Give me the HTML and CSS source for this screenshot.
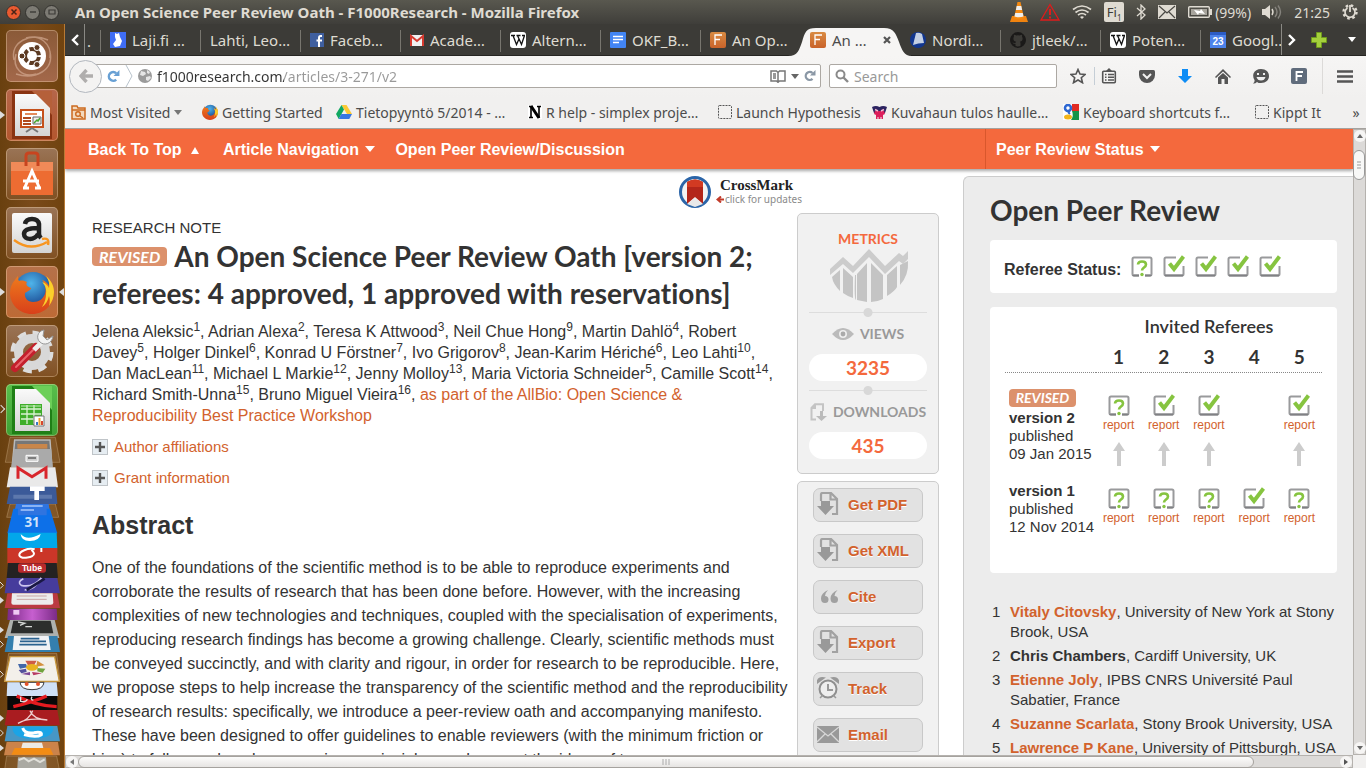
FILE: index.html
```html
<!DOCTYPE html>
<html lang="en">
<head>
<meta charset="utf-8">
<title>An Open Science Peer Review Oath - F1000Research</title>
<link rel="stylesheet" href="styles.css">
</head>
<body>
<svg class="defs" aria-hidden="true">
  <defs>
    <linearGradient id="gAqua" x1="0" y1="0" x2="0" y2="1"><stop offset="0" stop-color="#d98b42"/><stop offset="1" stop-color="#c9632a"/></linearGradient>
    <linearGradient id="gGray" x1="0" y1="0" x2="0" y2="1"><stop offset="0" stop-color="#fafafa"/><stop offset="1" stop-color="#d4d4d4"/></linearGradient>
    <linearGradient id="gPurple" x1="0" y1="0" x2="1" y2="0"><stop offset="0" stop-color="#7a2a86"/><stop offset=".5" stop-color="#c65fcf"/><stop offset="1" stop-color="#7a2a86"/></linearGradient>
    <radialGradient id="gGlobe" cx=".45" cy=".3" r=".7"><stop offset="0" stop-color="#4fb4ea"/><stop offset="1" stop-color="#123a86"/></radialGradient>
    <linearGradient id="gFox" x1="0" y1="0" x2="0" y2="1"><stop offset="0" stop-color="#ee7a1d"/><stop offset="1" stop-color="#d8401a"/></linearGradient>
  </defs>
  <symbol id="firefox" viewBox="0 0 44 44">
    <circle cx="23" cy="21" r="19" fill="url(#gGlobe)"/>
    <path d="M36 6c6 5 8 11 8 16 0 12-9 22-22 22C9 44 0 34 0 23c0-5 2-10 5-13 1-2 3-4 3-4 0 2 0 4 1 5 3-1 6 0 8 1-2 3 1 5 4 6 0 2-3 3-6 5-1 5 3 9 8 9 6 0 10-3 12-8 2-6-1-12-3-14 4 1 6 4 7 6 1-4-1-8-3-10z" fill="url(#gFox)"/>
    <path d="M36 6c6 5 8 11 8 16 0 5-2 10-5 14 1-4 1-7 0-10-1 5-4 9-7 11 3-5 4-9 4-13 1-6-2-10-4-12 4 1 6 4 7 6 1-5-1-9-3-12z" fill="#fbcf2b"/>
  </symbol>
  <symbol id="f1000" viewBox="0 0 16 16"><rect width="16" height="16" rx="2" fill="url(#gAqua)"/><path d="M5 13V3h7M5 7.500h5" fill="none" stroke="#fff" stroke-width="1.300"/></symbol>
  <symbol id="wiki" viewBox="0 0 16 16"><rect width="16" height="16" rx="3" fill="#fff"/><path d="M1 3.500h4M6.500 3.500h4M12 3.500h3M3 3.500l3.500 9L9 7M7.500 3.500l4 9 3-9" fill="none" stroke="#111" stroke-width="1.300"/></symbol>
  <symbol id="check" viewBox="0 0 22 22"><path d="M13 2.500H3Q1.500 2.500 1.500 4v15Q1.500 20.500 3 20.500h16q1.500 0 1.500-1.500v-8" fill="#fff" stroke="#999a9c" stroke-width="2"/><path d="M2 20.500h18" stroke="#808184" stroke-width="2"/><path d="M6.500 8.500l4.500 5.500L20.500 1.500" fill="none" stroke="#86c440" stroke-width="4"/></symbol>
  <symbol id="query" viewBox="0 0 22 22"><path d="M8 20.500H3Q1.500 20.500 1.500 19V4Q1.500 2.500 3 2.500h16q1.500 0 1.500 1.500v15q0 1.500-1.500 1.500h-5" fill="#fff" stroke="#999a9c" stroke-width="2"/><path d="M2 20q.3.500 1 .5h5M14 20.500h5q.700 0 1-.5" fill="none" stroke="#808184" stroke-width="2"/><path d="M7 9.500q0-3 4-3t4 3c0 3-4 3-4 6" fill="none" stroke="#86c440" stroke-width="2.600"/><circle cx="11" cy="19.500" r="1.700" fill="#86c440"/></symbol>
  <symbol id="uparrow" viewBox="0 0 12 24"><path d="M6 0l6 9H8v15H4V9H0z" fill="#ccc"/></symbol>
  <symbol id="getfile" viewBox="0 0 22 24"><path d="M4 9V2.500Q4 1 5.500 1H14l6 6v15H15M13.500 1v6.500H20" fill="none" stroke="#a2a2a2" stroke-width="2.200"/><path d="M4 9h9v5h4l-8.500 9L0 14h4z" fill="#999"/></symbol>
  <symbol id="dashed" viewBox="0 0 14 14"><rect x=".5" y=".5" width="13" height="13" rx="1" fill="none" stroke="#555" stroke-dasharray="2 1"/></symbol>
  <symbol id="reload" viewBox="0 0 12 12"><path d="M8.500 8.800A4 4 0 1 1 8.500 3" fill="none" stroke="currentColor" stroke-width="2.300"/><path d="M11.500 0v5.500H6z" fill="currentColor"/></symbol>
  <symbol id="plus" viewBox="0 0 16 16"><rect x=".5" y=".5" width="15" height="15" fill="#e6edf2" stroke="#bfc4c8"/><path d="M8 3v10M3 8h10" stroke="#555" stroke-width="2.400"/></symbol>
  <symbol id="cone" viewBox="0 0 18 20"><path d="M2 14h14l2 6H0z" fill="#f0830f"/><path d="M7.500 0h3L14 16q-5 2-10 0z" fill="#f58a12"/><path d="M6.700 4h4.600l.8 4H5.900zM5.200 11h7.600l.7 3.500q-4.500 1.500-9 0z" fill="#eee"/></symbol>
</svg>

<header class="topbar">
  <div class="winbtns">
    <button class="wbtn close" aria-label="Close"><svg width="8" height="8" viewBox="0 0 8 8"><path d="M1.500 1.500l5 5M6.500 1.500l-5 5" stroke="#4a2418" stroke-width="1.500"/></svg></button>
    <button class="wbtn" aria-label="Minimise"><svg width="8" height="8" viewBox="0 0 8 8"><path d="M1 4h6" stroke="#3c3b37" stroke-width="1.400"/></svg></button>
    <button class="wbtn" aria-label="Maximise"><svg width="8" height="8" viewBox="0 0 8 8"><path d="M1 2h6v4H1z" fill="none" stroke="#3c3b37" stroke-width="1.200"/></svg></button>
  </div>
  <div class="wintitle">An Open Science Peer Review Oath - F1000Research - Mozilla Firefox</div>
  <div class="indicators">
    <svg width="18" height="20"><use href="#cone"/></svg>
    <svg width="20" height="18" viewBox="0 0 20 18"><path d="M10 1.500L19 17H1z" fill="none" stroke="#e01b1b" stroke-width="1.300"/><path d="M10 6v6M10 13.500v2" stroke="#e01b1b" stroke-width="2"/></svg>
    <svg width="20" height="14" viewBox="0 0 20 14"><g fill="none" stroke="#dfdbd2" stroke-width="1.700"><path d="M1 4.500q9-7 18 0M3.500 7.500q6.500-5 13 0M6 10q4-3 8 0"/></g><path d="M8 12q2-1.500 4 0l-2 2z" fill="#dfdbd2"/></svg>
    <span class="kbd">Fi<sub>1</sub></span>
    <svg width="10" height="16" viewBox="0 0 10 16"><path d="M1 4l8 7-4 4V1l4 4-8 7" fill="none" stroke="#dfdbd2" stroke-width="1.300"/></svg>
    <svg width="18" height="14" viewBox="0 0 18 14"><rect width="18" height="14" fill="#dfdbd2"/><path d="M1 1l8 7 8-7M1 13l6-6M17 13l-6-6" fill="none" stroke="#4a4944" stroke-width="1.200"/></svg>
    <span class="battery"><svg width="24" height="12" viewBox="0 0 24 12"><rect x=".7" y=".7" width="20.600" height="10.600" rx="1" fill="none" stroke="#dfdbd2" stroke-width="1.400"/><rect x="3" y="3" width="16" height="6" fill="#a7a49c"/><path d="M22 3h2v6h-2z" fill="#dfdbd2"/><path d="M6 4l6 1 1-2 4 5-6-1-1 2z" fill="#fff"/></svg>(99%)</span>
    <svg width="20" height="16" viewBox="0 0 20 16"><path d="M0 5h3l5-4v14l-5-4H0z" fill="#dfdbd2"/><g fill="none" stroke-width="1.400"><path d="M10 5q2 3 0 6" stroke="#dfdbd2"/><path d="M13 3q4 5 0 10M16 1.500q5 6.500 0 13" stroke="#85837d"/></g></svg>
    <time class="clock">21:25</time>
    <svg width="16" height="16" viewBox="0 0 16 16"><circle cx="8" cy="8" r="6.500" fill="none" stroke="#dfdbd2" stroke-width="2.400" stroke-dasharray="2.500 2.600"/><path d="M5.500 4A5 5 0 1 0 10.500 4" fill="none" stroke="#dfdbd2" stroke-width="1.700"/><path d="M8 1v7" stroke="#dfdbd2" stroke-width="1.800"/></svg>
  </div>
</header>

<div class="desktop">
  <nav class="dock" aria-label="Launcher">
    <a class="tile t-ubuntu" href="#" aria-label="Dash">
      <svg width="52" height="52" viewBox="0 0 52 52"><g fill="none" stroke="#dcb49c" stroke-opacity=".6" stroke-width="1.500"><path d="M8 30C4 12 24 2 42 10M44 22c4 18-14 28-34 22M20 8c14-4 26 6 24 20M30 44C16 48 6 38 10 24"/></g><circle cx="26" cy="26" r="14" fill="#fff"/><circle cx="26" cy="26" r="7" fill="none" stroke="#5c3a22" stroke-width="4" stroke-dasharray="12.500 2.160" stroke-dashoffset="-1"/><g fill="#5c3a22" stroke="#fff"><circle cx="16" cy="26" r="3"/><circle cx="31" cy="17.500" r="3"/><circle cx="31" cy="34.500" r="3"/></g></svg></a>
    <a class="tile t-rust on" href="#" aria-label="Impress">
      <svg width="52" height="52" viewBox="0 0 52 52"><path d="M6 2h40v48H6z" fill="#8a3412"/><path d="M26 2h20v24z" fill="#b5603a"/><path d="M9 5h21l14 14v28H9z" fill="url(#gGray)"/><path d="M15 21h22v17H15z" fill="#fff" stroke="#c5501b" stroke-width="2"/><path d="M19 25h12" stroke="#e38b5c" stroke-width="2"/><path d="M17 29h8M17 32h8M17 35h8" stroke="#b14a1e" stroke-width="2"/><path d="M27 28h8v7h-8z" fill="#eee" stroke="#666"/><path d="M28 34l3-3 1 1 2-3" fill="none" stroke="#45a52d" stroke-width="1.500"/><path d="M26 39l-6 4M26 39l6 4" stroke="#777" stroke-width="2"/></svg></a>
    <a class="tile" href="#" aria-label="Software Centre">
      <svg width="52" height="52" viewBox="0 0 52 52"><path d="M5 14h42v33H5z" fill="#ed6c32"/><path d="M5 14h42v9H5z" fill="#f08a58"/><path d="M20 18V8q0-3 3-3h6q3 0 3 3v10" fill="none" stroke="#c8441f" stroke-width="3"/><path d="M17 40h6M29 40h6M19 39l7-16 7 16M17 33h16" fill="none" stroke="#fff" stroke-width="3"/></svg></a>
    <a class="tile" href="#" aria-label="Amazon">
      <svg width="52" height="52" viewBox="0 0 52 52"><rect x="6" y="6" width="40" height="40" rx="2" fill="url(#gGray)"/><path d="M19 17q1-5 7-5t7 5v10q0 2 2 4M32 21c-8 0-14 1-14 6 0 6 10 7 14 0" fill="none" stroke="#222" stroke-width="4.500"/><path d="M8 33q16 12 33 2M36 32q8-2 6 6" fill="none" stroke="#f79520" stroke-width="2.400"/></svg></a>
    <a class="tile t-orange on focus" href="#" aria-label="Firefox"><svg width="44" height="44"><use href="#firefox"/></svg></a>
    <a class="tile" href="#" aria-label="System Settings">
      <svg width="52" height="52" viewBox="0 0 52 52"><circle cx="26" cy="27" r="18" fill="none" stroke="#ddd" stroke-width="7" stroke-dasharray="8 6.130"/><circle cx="26" cy="27" r="13.500" fill="none" stroke="#d8d8d8" stroke-width="9"/><path d="M9 43L30 22" stroke="#c41f2c" stroke-width="8" stroke-linecap="round"/><path d="M10 42L28 24" stroke="#e8666c" stroke-width="2" stroke-linecap="round"/><path d="M28 25l7-7" stroke="#eee" stroke-width="5"/><path d="M38 5c-7 1-8 9-4 12 4 4 12 2 13-6l-6 4-4-4z" fill="#f2f2f2" stroke="#999"/></svg></a>
    <a class="tile t-green some" href="#" aria-label="Calc">
      <svg width="52" height="52" viewBox="0 0 52 52"><path d="M6 2h40v48H6z" fill="#1f7f16"/><path d="M26 2h20v24z" fill="#6ccf58"/><path d="M9 5h21l14 14v28H9z" fill="url(#gGray)"/><path d="M14 20h22v21H14z" fill="#3fae2a"/><path d="M15 25h20M15 30h20M15 35h20M21 21v19M28 21v19" stroke="#d9f2d2" stroke-width="1.300"/><path d="M15 22h20" stroke="#caf0c0"/><path d="M28 32h10v10H28z" fill="#fff" stroke="#777"/><path d="M30 38h2v3h-2z" fill="#3b78c4"/><path d="M32.500 34h2v7h-2z" fill="#f0a030"/><path d="M35 37h2v4h-2z" fill="#d8462c"/></svg></a>
    <svg class="stack" width="65" height="332" viewBox="0 168 195 996" role="img" aria-label="More launchers">
      <g fill="#d5b58c" fill-opacity=".16" stroke="#d9b78e" stroke-opacity=".55" stroke-width="2"><path d="M30 172h136l14 75H16zM30 372h136l10 40H20zM26 820h144l10 80H14zM20 1128h150l8 40H14z"/></g>
      <path d="M42 178h110l6 84H34z" fill="#b9b9b9"/><path d="M46 182h102l2 26H44z" fill="#777"/><path d="M52 192h90v14H52z" fill="#c9864a"/><path d="M42 208h112l4 54H34z" fill="#aaa"/><path d="M78 226h36v18H78z" fill="#ccc" stroke="#fff" stroke-width="3"/><path d="M84 234h24" stroke="#555" stroke-width="4"/>
      <path d="M30 262h136l8 60H20z" fill="#e9e9e9"/><path d="M54 296V264l42 26 42-26v32" fill="none" stroke="#d8262c" stroke-width="9"/>
      <path d="M30 320h138l4 52H20z" fill="#3b5a99"/><path d="M40 344h116v12H40z" fill="#5d78ad"/><path d="M90 326h44M110 320v40" stroke="#fff" stroke-width="14"/>
      <path d="M48 372h98l6 38H40z" fill="#2f74e0"/><path d="M66 378h62M62 390h40" stroke="#a9c8fa" stroke-width="5"/>
      <path d="M40 386h14v20h86v-20h10l22 74H22z" fill="#0d70e8"/><text x="96" y="441" text-anchor="middle" class="st-31">31</text>
      <path d="M24 458h146l2 46H22z" fill="#02a7ea"/><path d="M62 462q18 22 60 0-4 22-34 21-24 0-26-21z" fill="#fff"/>
      <path d="M22 504h150v46H22z" fill="#cb3628"/><path d="M104 508c-20-5-48 6-46 18 4 12 46 8 44-6q-2-6-8-10M124 504v12" fill="none" stroke="#fff" stroke-width="6"/>
      <path d="M24 549h146l4 45H20z" fill="#242222"/><rect x="54" y="550" width="84" height="28" rx="8" fill="#b8292c"/><text x="96" y="573" text-anchor="middle" class="st-tube">Tube</text>
      <path d="M20 594h152l8 46H14z" fill="#463c9c"/><path d="M70 596q-20 10-6 20 34 8 60-22-20 36-50 36" fill="none" stroke="#cdc6ef" stroke-width="5"/><path d="M134 596l-54 34" stroke="#191845" stroke-width="8"/>
      <path d="M22 640h150l8 44H14z" fill="#bb3a42"/><path d="M36 640h122l2 28q0 6-8 6H40q-6 0-6-6z" fill="#ececec"/><path d="M50 648h90M50 658h90" stroke="#c9a5a5" stroke-width="3"/>
      <path d="M24 686h146l2 34H22z" fill="url(#gPurple)"/><path d="M40 690h18v14H40z" fill="#f0c9f3"/>
      <path d="M30 720h134l14 54H14z" fill="#aeb1ae"/><path d="M40 722h112l8 38H32z" fill="#2c2e2c"/><path d="M54 726l20 4-14 6M76 740h20" fill="none" stroke="#d5d8d5" stroke-width="4"/>
      <path d="M24 768h148l8 48H14z" fill="#347fae"/><path d="M42 768h104l6 42H38z" fill="#f1f3f5"/><path d="M62 776h56M60 784h78M58 794h82" stroke="#2a628f" stroke-width="5"/>
      <path d="M30 830h134l14 74H14z" fill="#f3f0ea" stroke="#c7973d" stroke-width="4"/><g><path d="M76 842h34l-8 14H84z" fill="#cd5c48"/><path d="M112 842l22 14-26 4z" fill="#d4903c"/><path d="M54 852h24l4 10-22 4z" fill="#4267a8"/><path d="M56 870l22-4 2 10-16 4z" fill="#55529c"/><path d="M64 882l26-6v10z" fill="#7b4796"/><path d="M96 876l30 4-26 6z" fill="#b73a63"/><path d="M112 864l24 2-8 12-16-4z" fill="#70a23e"/><ellipse cx="96" cy="862" rx="18" ry="10" fill="#e8b321"/></g>
      <path d="M22 907h148l4 41H20z" fill="#cfe1f7"/><path d="M60 907h72q-2 22-36 22t-36-22z" fill="#fff" stroke="#3c3c3c" stroke-width="3"/><circle cx="80" cy="912" r="6" fill="#e5532b"/><circle cx="114" cy="912" r="6" fill="#e5532b"/>
      <path d="M22 948h150v42H22z" fill="#090909"/><path d="M50 948q60 30 120 32M40 980q60-14 100-32" fill="none" stroke="#e31b20" stroke-width="10"/><path d="M62 950v14q16 4 20-6M96 950q-6 10 4 10" fill="none" stroke="#ddd" stroke-width="4"/>
      <path d="M22 990h150l8 46H14z" fill="#a91c20"/><path d="M90 992q10 26 52 28-60-8-88 10 36-12 44-38" fill="none" stroke="#efcfcf" stroke-width="4"/>
      <path d="M22 1038h150l8 46H14z" fill="#4797c5"/><path d="M38 1040h122q2 36-62 36t-60-36z" fill="#1ba4e6"/><path d="M68 1044q6 18 34 14 24-4 22 6-14 10-52 0" fill="none" stroke="#fff" stroke-width="9"/>
      <path d="M20 1086h154l6 40H12z" fill="#cb834a"/><path d="M44 1104h106l10 20H34z" fill="#f28c14"/><path d="M68 1088h58l4 16H64z" fill="#eceae5"/>
      <path d="M54 1132h84l2 32H52z" fill="#aaa9a2"/><path d="M56 1140l16-6 14 10 16-8 18 10 14-8" fill="none" stroke="#e1e0da" stroke-width="6"/>
      <g fill="#ddd"><path d="M0 651l12 10-12 10zM0 740l12 10-12 10zM0 1005l12 10-12 10zM0 1094l12 10-12 10z"/></g>
      <g fill="none" stroke="#ddd" stroke-width="3"><path d="M0 606l10 10-10 10M0 783l10 10-10 10M0 873l10 10-10 10M0 1049l10 10-10 10"/></g>
    </svg>
  </nav>

  <div class="window">
    <div class="tabbar">
      <button class="scroll-prev" aria-label="Scroll left"><svg width="8" height="14" viewBox="0 0 8 14"><path d="M7 2L2 7l5 5" fill="none" stroke="#fff" stroke-width="2.400"/></svg></button>
      <span class="tabrest">.</span>
      <div class="tabs">
        <a class="tab" href="#"><svg width="16" height="16" viewBox="0 0 16 16"><path d="M0 0h16v16H0z" fill="#3f6df5"/><path d="M5 1l2 1 2-1 1 4 2 4-2 5-5 1-2-3 3-4-1-3z" fill="#fff"/></svg>Laji.fi …</a>
        <a class="tab" href="#">Lahti, Leo…</a>
        <a class="tab" href="#"><svg width="14" height="14" viewBox="0 0 14 14"><path d="M0 0h14v14H0z" fill="#3f5f9f"/><path d="M12 3h-1.500Q9 3 9 5v9M6.500 7.500H12" fill="none" stroke="#fff" stroke-width="2"/></svg>Faceb…</a>
        <a class="tab" href="#"><svg width="14" height="12" viewBox="0 0 14 12"><path d="M0 1h14v11H0z" fill="#f1f1f1"/><path d="M1 12V2l6 5 6-5v10" fill="none" stroke="#d63a2f" stroke-width="2"/></svg>Acade…</a>
        <a class="tab" href="#"><svg width="16" height="16"><use href="#wiki"/></svg>Altern…</a>
        <a class="tab" href="#"><svg width="16" height="16" viewBox="0 0 16 16"><rect width="16" height="16" rx="1" fill="#4285f4"/><path d="M3 4.500h10M3 7.500h10M3 10.500h6" stroke="#fff" stroke-width="1.500"/></svg>OKF_B…</a>
        <a class="tab" href="#"><svg width="16" height="16"><use href="#f1000"/></svg>An Op…</a>
        <a class="tab active" href="#"><svg class="shape" width="124" height="28" viewBox="0 0 124 28"><path d="M0 28C10 28 11 22 14 14 17 4 18 0 28 0H96c10 0 12 6 15 14 3 8 5 14 13 14z" fill="#f6f5f4"/></svg><svg width="16" height="16"><use href="#f1000"/></svg><span>An …</span><svg class="x" width="8" height="8" viewBox="0 0 8 8"><path d="M1 1l6 6M7 1L1 7" stroke="#555" stroke-width="2.200"/></svg></a>
        <a class="tab plain" href="#"><svg width="16" height="16" viewBox="0 0 16 16"><circle cx="8" cy="8" r="8" fill="#12368f"/><path d="M3 13L6 1q3-1 6 1l2 9q-6 0-11 2z" fill="#c3cfe4"/></svg>Nordi…</a>
        <a class="tab" href="#"><svg width="16" height="16" viewBox="0 0 16 16"><path d="M8 1a7 7 0 0 0-2.500 13.700V12C3 12.500 3 10.500 2 10.300c1-.5 1.700 1.500 3.500.7 0-.7.300-1 .6-1.300C3 9.300 3 6 4 4.800 3.700 4 3.700 3 4 2.500c1 0 1.700.7 2.200 1a8 8 0 0 1 3.600 0c.5-.3 1.200-1 2.200-1 .3.500.3 1.500 0 2.300 1 1.200 1 4.500-2.100 4.900.5.500.6 1 .6 1.800v3.200A7 7 0 0 0 8 1z" fill="#1b1a19"/><circle cx="8" cy="8" r="7.200" fill="none" stroke="#1b1a19" stroke-width="1.500"/></svg>jtleek/…</a>
        <a class="tab" href="#"><svg width="16" height="16"><use href="#wiki"/></svg>Poten…</a>
        <a class="tab last" href="#"><svg width="16" height="16" viewBox="0 0 16 16"><path d="M0 0h16v16H0z" fill="#4c82ea"/><path d="M0 0h16v3H0z" fill="#2c5cc5"/><text x="8" y="13" text-anchor="middle" class="ico-23">23</text></svg>Googl…</a>
      </div>
      <button class="scroll-next" aria-label="Scroll right"><svg width="8" height="14" viewBox="0 0 8 14"><path d="M1 2l5 5-5 5" fill="none" stroke="#fff" stroke-width="2.400"/></svg></button>
      <button class="newtab" aria-label="New tab"><svg width="16" height="16" viewBox="0 0 16 16"><path d="M5.500.5h5v5h5v5h-5v5h-5v-5h-5v-5h5z" fill="#a4d03c" stroke="#6f9a1c"/></svg></button>
      <button class="tablist" aria-label="List tabs"><svg width="8" height="5" viewBox="0 0 8 5"><path d="M0 0h8L4 5z" fill="#fff"/></svg></button>
    </div>

    <div class="navbar">
      <button class="back" aria-label="Back"><svg width="14" height="14" viewBox="0 0 14 14"><path d="M7.500 1L2 7l5.500 6M2 7h12" fill="none" stroke="#b0aead" stroke-width="3.400"/></svg></button>
      <div class="urlbox">
        <button class="reload blue" aria-label="Resume"><svg width="13" height="13"><use href="#reload"/></svg></button>
        <svg width="8" height="22" viewBox="0 0 8 22"><path d="M1 0l6 11-6 11" fill="none" stroke="#b8c3cc"/></svg>
        <svg width="14" height="14" viewBox="0 0 14 14"><circle cx="7" cy="7" r="7" fill="#9b9b9b"/><path d="M3 2l4 1 1 2-3 2-3-1zM8 8l4-1 1 2-3 3-2-1zM9 1l3 2-1 2-2-1z" fill="#e6e6e6"/></svg>
        <input class="url" type="text" aria-label="Address" value="f1000research.com/articles/3-271/v2">
        <svg width="16" height="13" viewBox="0 0 16 13"><path d="M1 1h5.500L8 2.500 9.500 1H15v10H9.500L8 12.300 6.500 11H1zM8 3v9M3 4h3M3 6h3M3 8h3" fill="none" stroke="#777" stroke-width="1.500"/></svg>
        <svg width="8" height="5" viewBox="0 0 8 5"><path d="M0 0h8L4 5z" fill="#666"/></svg>
        <button class="reload" aria-label="Reload"><svg width="12" height="12"><use href="#reload"/></svg></button>
      </div>
      <label class="searchbox"><svg width="14" height="14" viewBox="0 0 14 14"><circle cx="5.500" cy="5.500" r="4" fill="none" stroke="#8a8a8a" stroke-width="2"/><path d="M8.500 8.500l4.500 4.500" stroke="#8a8a8a" stroke-width="2.400"/></svg><input type="text" placeholder="Search" aria-label="Search"></label>
      <div class="tools">
        <button aria-label="Bookmark"><svg width="16" height="16" viewBox="0 0 16 16"><path d="M8 1.500l2 4.500 5 .5-3.700 3.200 1.200 5L8 12l-4.500 2.700 1.200-5L1 6.500 6 6z" fill="none" stroke="#555" stroke-width="1.600"/></svg></button>
        <button class="sep" aria-label="Bookmarks list"><svg width="16" height="16" viewBox="0 0 16 16"><rect x="1.700" y="3.200" width="12.600" height="11.600" rx="1" fill="none" stroke="#555" stroke-width="1.600"/><path d="M8 0l3 3H5z" fill="#555"/><path d="M4 6.500h1.500M7 6.500h6M4 9.200h1.500M7 9.200h6M4 12h1.500M7 12h6" stroke="#555" stroke-width="1.500"/></svg></button>
        <button aria-label="Pocket"><svg width="16" height="15" viewBox="0 0 16 15"><path d="M1.500 1h13Q16 1 16 2.500V6a8 8 0 0 1-16 0V2.500Q0 1 1.500 1z" fill="#555"/><path d="M4 5l4 4 4-4" fill="none" stroke="#f2f1f0" stroke-width="2"/></svg></button>
        <button aria-label="Downloads"><svg width="14" height="14" viewBox="0 0 14 14"><path d="M4 0h6v7h4l-7 7-7-7h4z" fill="#0d8cf5"/></svg></button>
        <button aria-label="Home"><svg width="16" height="15" viewBox="0 0 16 15"><path d="M0 8l8-8 8 8-1 1-7-6.500L1 9z" fill="#555"/><path d="M3 8.500L8 4l5 4.500V15H9.500v-5h-3v5H3z" fill="#555"/></svg></button>
        <button aria-label="Chat"><svg width="16" height="15" viewBox="0 0 16 15"><path d="M8 0c5 0 8 3 8 7s-3 7-8 7c-2 0-3 0-4-1q-2 2-4 1.500Q2 13 1.500 11-.5 8 .5 4.500 2.500 0 8 0z" fill="#555"/><path d="M4 5h2M10 5h2" stroke="#eee" stroke-width="2"/><path d="M3.500 8h9q-1 3.500-4.500 3.500T3.500 8z" fill="#eee"/></svg></button>
        <button aria-label="F1000"><svg width="16" height="16" viewBox="0 0 16 16"><rect width="16" height="16" rx="2" fill="#606c7c"/><path d="M5.500 13V4H12M5.500 8H11" fill="none" stroke="#fff" stroke-width="1.800"/></svg></button>
        <button class="menu" aria-label="Menu"><svg width="16" height="13" viewBox="0 0 16 13"><path d="M0 1.500h16M0 6.500h16M0 11.500h16" stroke="#555" stroke-width="2.600"/></svg></button>
      </div>
    </div>

    <div class="bookmarks">
      <a href="#"><svg width="15" height="15" viewBox="0 0 15 15"><path d="M1 14V1h5l1 2h7v11z" fill="#f3d9bd" stroke="#cc6a1f" stroke-width="1.500"/><path d="M1 5h13" stroke="#cc6a1f" stroke-width="1.500"/><circle cx="7" cy="9" r="2.300" fill="none" stroke="#cc6a1f" stroke-width="1.400"/><path d="M9 11l3 2" stroke="#cc6a1f" stroke-width="1.500"/></svg>Most Visited<svg class="caret" width="8" height="5" viewBox="0 0 8 5"><path d="M0 0h8L4 5z" fill="#777"/></svg></a>
      <a href="#"><svg width="16" height="16"><use href="#firefox"/></svg>Getting Started</a>
      <a href="#"><svg width="16" height="14" viewBox="0 0 16 14"><path d="M5.500 0h5L16 9h-5z" fill="#fcc934"/><path d="M5.500 0L8 4.500 2.700 14 0 9z" fill="#11a861"/><path d="M5.300 9H16l-2.700 5H2.700z" fill="#3777e3"/></svg>Tietopyyntö 5/2014 - …</a>
      <a href="#"><svg width="14" height="14" viewBox="0 0 14 14"><path d="M0 0h14v14H0z" fill="#fff"/><path d="M1 1.500h4M9 1.500h4M1 12.500h4M3 1v11M11 1.500V13" stroke="#000" stroke-width="1.600"/><path d="M3 1l8 12" stroke="#000" stroke-width="3"/></svg>R help - simplex proje…</a>
      <a href="#"><svg width="14" height="14"><use href="#dashed"/></svg>Launch Hypothesis</a>
      <a href="#"><svg width="15" height="13" viewBox="0 0 15 13"><path d="M0 1q4-2 7.500 0Q11-1 15 1l-2 6H2z" fill="#2c2360"/><path d="M3 5h9l1 3-2 1v4H9.500v-2h-1v2h-2v-2h-1v2H4V9L2 8z" fill="#dc1f5c"/><path d="M3 3.500l3 1.500M12 3.500L9 5" stroke="#f3b4d0" stroke-width="1.500"/></svg>Kuvahaun tulos haulle…</a>
      <a href="#"><svg width="16" height="16" viewBox="0 0 16 16"><path d="M0 0h16v16H0z" fill="#fff"/><path d="M9 0h7v7H9z" fill="#e22b22"/><path d="M9 7h7v9H8q3-4 1-9z" fill="#159447"/><circle cx="5" cy="4" r="3" fill="none" stroke="#2d67d2" stroke-width="2.600"/><path d="M7 7q-3 1 0 3" fill="none" stroke="#2d67d2" stroke-width="2"/><ellipse cx="5" cy="13" rx="4" ry="2.500" fill="#f4b61c"/></svg>Keyboard shortcuts f…</a>
      <a href="#"><svg width="14" height="14"><use href="#dashed"/></svg>Kippt It</a>
      <button class="more" aria-label="More bookmarks">»</button>
    </div>

    <div class="viewport">
      <div class="page">
        <nav class="sitenav">
          <div class="navmain">
            <a href="#">Back To Top <svg width="8" height="7" viewBox="0 0 8 7"><path d="M4 0l4 7H0z" fill="#fff"/></svg></a>
            <a href="#">Article Navigation<svg width="10" height="6" viewBox="0 0 10 6"><path d="M0 0h10L5 6z" fill="#fff"/></svg></a>
            <a href="#">Open Peer Review/Discussion</a>
          </div>
          <a class="navside" href="#">Peer Review Status<svg width="10" height="6" viewBox="0 0 10 6"><path d="M0 0h10L5 6z" fill="#fff"/></svg></a>
        </nav>
        <div class="body">
          <div class="left">
            <a class="crossmark" href="#">
              <svg width="32" height="32" viewBox="0 0 32 32"><circle cx="16" cy="16" r="14.500" fill="#f3f3f3" stroke="#2b65a8" stroke-width="3"/><path d="M8 6q8-5 16 0v22l-8-7-8 7z" fill="#b3261a"/><path d="M8 28l8-6 8 6-8 3z" fill="#e9e9e9"/><path d="M8 6q8-5 16 0v5H8z" fill="#d23a22"/></svg>
              <span class="cm"><b>CrossMark</b><span><svg width="8" height="7" viewBox="0 0 8 7"><path d="M8 3.500H2M5 .5L1.500 3.500 5 6.500" fill="none" stroke="#c23b2a" stroke-width="2"/></svg>click for updates</span></span>
            </a>
            <div class="columns">
              <article class="article">
                <p class="kind">RESEARCH NOTE</p>
                <h1><span class="revised">REVISED</span>An Open Science Peer Review Oath [version 2; referees: 4 approved, 1 approved with reservations]</h1>
                <p class="authors">Jelena Aleksic<sup>1</sup>, Adrian Alexa<sup>2</sup>, Teresa K Attwood<sup>3</sup>, Neil Chue Hong<sup>9</sup>, Martin Dahlö<sup>4</sup>, Robert Davey<sup>5</sup>, Holger Dinkel<sup>6</sup>, Konrad U Förstner<sup>7</sup>, Ivo Grigorov<sup>8</sup>, Jean-Karim Hériché<sup>6</sup>, Leo Lahti<sup>10</sup>, Dan MacLean<sup>11</sup>, Michael L Markie<sup>12</sup>, Jenny Molloy<sup>13</sup>, Maria Victoria Schneider<sup>5</sup>, Camille Scott<sup>14</sup>, Richard Smith-Unna<sup>15</sup>, Bruno Miguel Vieira<sup>16</sup>, <a href="#">as part of the AllBio: Open Science &amp; Reproducibility Best Practice Workshop</a></p>
                <a class="expand" href="#"><svg width="16" height="16"><use href="#plus"/></svg>Author affiliations</a>
                <a class="expand" href="#"><svg width="16" height="16"><use href="#plus"/></svg>Grant information</a>
                <h2>Abstract</h2>
                <p class="abstract">One of the foundations of the scientific method is to be able to reproduce experiments and corroborate the results of research that has been done before. However, with the increasing complexities of new technologies and techniques, coupled with the specialisation of experiments, reproducing research findings has become a growing challenge. Clearly, scientific methods must be conveyed succinctly, and with clarity and rigour, in order for research to be reproducible. Here, we propose steps to help increase the transparency of the scientific method and the reproducibility of research results: specifically, we introduce a peer-review oath and accompanying manifesto. These have been designed to offer guidelines to enable reviewers (with the minimum friction or bias) to follow and apply open science principles, and support the ideas of transparency, reproducibility and responsibility.</p>
              </article>
              <aside class="metricscol">
                <section class="metrics">
                  <h3>METRICS</h3>
                  <svg class="chart" width="80" height="55" viewBox="0 0 80 55"><path d="M1 21l13-12 10 9L40 1l16 17L70 5l4 3 5-5v8l-5 5-4-3-14 13L40 9 24 25l-10-9L1 27z" fill="#ccc"/><path d="M3 29l8-7v21Q4 36 3 29zM14 20l10 9v21q-6-2-10-5zM27 27v25q-2 0-1-25zM28 26v26l10 2V15zM42 15l12 12v24q-6 3-12 3zM58 27v21q8-5 10-9V18zM71 17l8-4q1 14-8 24z" fill="#c4c4c4"/></svg>
                  <div class="rule"></div>
                  <p class="label"><svg width="22" height="12" viewBox="0 0 22 12"><path d="M0 6q11-12 22 0-11 12-22 0z" fill="#bbb"/><circle cx="11" cy="6" r="4" fill="#eee"/><circle cx="11" cy="6" r="2.400" fill="#aaa"/></svg>VIEWS</p>
                  <p class="count">3235</p>
                  <div class="rule"></div>
                  <p class="label"><svg width="17" height="18" viewBox="0 0 17 18"><path d="M6 16.500H1.500V5L5 1.200h8V8M5 1v4H1.500" fill="none" stroke="#c4c4c4" stroke-width="2"/><path d="M10 8h3v5h4l-5.500 5L6 13h4z" fill="#bbb"/></svg>DOWNLOADS</p>
                  <p class="count">435</p>
                </section>
                <section class="actions">
                  <button><svg width="22" height="24"><use href="#getfile"/></svg>Get PDF</button>
                  <button><svg width="22" height="24"><use href="#getfile"/></svg>Get XML</button>
                  <button><svg width="22" height="24" viewBox="0 0 22 24"><path d="M11 6Q4 9 4 14.500 4 19 8 19q3.500 0 3.500-3.500T8 12q0-3 3-6zM20.500 6q-7 3-7 8.500 0 4.500 4 4.500 3.500 0 3.500-3.500T17.500 12q0-3 3-6z" fill="#a0a0a0"/></svg>Cite</button>
                  <button><svg width="22" height="24"><use href="#getfile"/></svg>Export</button>
                  <button><svg width="22" height="24" viewBox="0 0 22 24"><circle cx="11" cy="13" r="8.500" fill="#eee" stroke="#8f8f8f" stroke-width="2"/><path d="M11 8v6h5" fill="none" stroke="#999" stroke-width="2"/><path d="M0 7q1-6 7-5zM22 7q-1-6-7-5zM3 22l3-3M19 22l-3-3" fill="#999" stroke="#999" stroke-width="1.500"/></svg>Track</button>
                  <button><svg width="22" height="24" viewBox="0 0 22 24"><path d="M0 4h22v17H0z" fill="#999"/><path d="M0 5l11 9 11-9M0 20l8-8M22 20l-8-8" fill="none" stroke="#d8d8d8" stroke-width="1.300"/></svg>Email</button>
                </section>
              </aside>
            </div>
          </div>
          <aside class="review">
            <h2>Open Peer Review</h2>
            <div class="card status"><b>Referee Status:</b><svg width="22" height="22"><use href="#query"/></svg><svg width="22" height="22"><use href="#check"/></svg><svg width="22" height="22"><use href="#check"/></svg><svg width="22" height="22"><use href="#check"/></svg><svg width="22" height="22"><use href="#check"/></svg></div>
            <div class="card invited">
              <table>
                <colgroup><col class="col-version"><col span="5"></colgroup>
                <thead>
                  <tr class="cap"><td></td><th colspan="5">Invited Referees</th></tr>
                  <tr class="nums"><td></td><th>1</th><th>2</th><th>3</th><th>4</th><th>5</th></tr>
                </thead>
                <tbody>
                  <tr class="v2">
                    <td><span class="revised small">REVISED</span><b>version 2</b><br>published<br>09 Jan 2015</td>
                    <td><a href="#"><svg width="22" height="22"><use href="#query"/></svg>report</a><svg class="up" width="12" height="24"><use href="#uparrow"/></svg></td>
                    <td><a href="#"><svg width="22" height="22"><use href="#check"/></svg>report</a><svg class="up" width="12" height="24"><use href="#uparrow"/></svg></td>
                    <td><a href="#"><svg width="22" height="22"><use href="#check"/></svg>report</a><svg class="up" width="12" height="24"><use href="#uparrow"/></svg></td>
                    <td></td>
                    <td><a href="#"><svg width="22" height="22"><use href="#check"/></svg>report</a><svg class="up" width="12" height="24"><use href="#uparrow"/></svg></td>
                  </tr>
                  <tr class="v1">
                    <td><b>version 1</b><br>published<br>12 Nov 2014</td>
                    <td><a href="#"><svg width="22" height="22"><use href="#query"/></svg>report</a></td>
                    <td><a href="#"><svg width="22" height="22"><use href="#query"/></svg>report</a></td>
                    <td><a href="#"><svg width="22" height="22"><use href="#query"/></svg>report</a></td>
                    <td><a href="#"><svg width="22" height="22"><use href="#check"/></svg>report</a></td>
                    <td><a href="#"><svg width="22" height="22"><use href="#query"/></svg>report</a></td>
                  </tr>
                </tbody>
              </table>
            </div>
            <ol class="referees">
              <li><span>1</span><p><a href="#">Vitaly Citovsky</a>, University of New York at Stony Brook, USA</p></li>
              <li><span>2</span><p><b>Chris Chambers</b>, Cardiff University, UK</p></li>
              <li><span>3</span><p><a href="#">Etienne Joly</a>, IPBS CNRS Université Paul Sabatier, France</p></li>
              <li><span>4</span><p><a href="#">Suzanne Scarlata</a>, Stony Brook University, USA</p></li>
              <li><span>5</span><p><a href="#">Lawrence P Kane</a>, University of Pittsburgh, USA</p></li>
            </ol>
          </aside>
        </div>
      </div>
      <div class="vscroll"><i class="cap-btn"><svg width="6" height="4" viewBox="0 0 6 4"><path d="M3 0l3 4H0z" fill="#666"/></svg></i><i class="vthumb"><svg width="4" height="8" viewBox="0 0 4 8"><path d="M0 1h4M0 4h4M0 7h4" stroke="#999"/></svg></i><i class="cap-btn end"><svg width="6" height="4" viewBox="0 0 6 4"><path d="M0 0h6L3 4z" fill="#666"/></svg></i></div>
      <div class="hscroll"><i class="cap-btn"><svg width="4" height="6" viewBox="0 0 4 6"><path d="M4 0v6L0 3z" fill="#777"/></svg></i><i class="hthumb"><svg width="8" height="6" viewBox="0 0 8 6"><path d="M1 0v6M4 0v6M7 0v6" stroke="#aaa"/></svg></i><i class="cap-btn end"><svg width="4" height="6" viewBox="0 0 4 6"><path d="M0 0l4 3-4 3z" fill="#555"/></svg></i></div>
      <div class="corner"></div>
    </div>
  </div>
</div>
</body>
</html>
```

FILE: styles.css
```css
* { box-sizing: border-box; }
body {
  margin: 0;
  height: 100vh;
  display: flex;
  flex-direction: column;
  overflow: hidden;
  font-family: "Liberation Sans", Arial, sans-serif;
  color: #333;
}
a { color: inherit; text-decoration: none; }
button { background: none; border: 0; padding: 0; font: inherit; color: inherit; display: flex; align-items: center; justify-content: center; }
svg { flex: none; }
.defs { position: absolute; width: 0; height: 0; }

/* desktop panel */
.topbar {
  flex: none;
  height: 24px;
  display: flex;
  align-items: center;
  background: linear-gradient(#59584f, #3f3e3a);
  color: #dfdbd2;
  font-family: "Noto Sans", "Open Sans", sans-serif;
  padding: 0 8px 0 6px;
}
.winbtns { display: flex; gap: 4px; width: 69px; }
.wbtn { width: 15px; height: 15px; border-radius: 50%; background: #7d7b74; border: 1px solid #33322e; }
.wbtn.close { background: #ea5a30; }
.wintitle { flex: 1; font-weight: 700; font-size: 15px; line-height: 24px; white-space: nowrap; }
.indicators { display: flex; align-items: center; gap: 12px; font-size: 14px; }
.kbd { width: 20px; height: 20px; border-radius: 2px; background: #dfdbd2; color: #3c3b37; text-align: center; line-height: 20px; font-size: 13px; }
.kbd sub { font-size: 8px; line-height: 1; }
.battery { display: flex; align-items: center; gap: 3px; margin-right: -1px; }

.desktop { flex: 1; display: flex; min-height: 0; }

/* launcher */
.dock {
  width: 65px;
  flex: none;
  display: flex;
  flex-direction: column;
  align-items: center;
  gap: 7px;
  padding-top: 6px;
  background: linear-gradient(90deg, #69400f, #7a4a1a 50%, #70430f);
  border-right: 1px solid #b87a35;
  overflow: hidden;
}
.tile {
  position: relative;
  flex: none;
  width: 52px;
  height: 52px;
  margin-right: 1px;
  display: flex;
  align-items: center;
  justify-content: center;
  border-radius: 5px;
  background: linear-gradient(#9a7456, #805022);
  box-shadow: inset 0 0 0 1px rgba(255, 225, 190, .35);
}
.t-ubuntu { background: linear-gradient(#8a5a38, #a3684a); }
.t-rust { background: linear-gradient(#b5664a, #b4562e); }
.t-orange { background: linear-gradient(#b5714a, #bd6a35); }
.t-green { background: linear-gradient(#59c04c, #3e9f33); }
.tile.on::before, .tile.focus::after, .tile.some::before {
  content: "";
  position: absolute;
  top: 22px;
  left: -6px;
  border: 4px solid transparent;
  border-left: 5px solid #ddd;
  border-right: 0;
}
.tile.some::before { border: 1px solid #ddd; border-width: 1px 1px 0 0; width: 5px; height: 5px; left: -8px; transform: rotate(45deg); }
.tile.focus::after { left: auto; right: -6px; border-left: 0; border-right: 5px solid #ddd; }
.stack { margin-top: -7px; align-self: flex-start; }
.st-31 { font: 700 40px "Open Sans", sans-serif; fill: #cfe2fb; }
.st-tube { font: 700 26px "Liberation Sans", sans-serif; fill: #fff; }
.ico-23 { font: 700 10px "Liberation Sans", sans-serif; fill: #fff; }

/* browser chrome */
.window { flex: 1; min-width: 0; display: flex; flex-direction: column; font-family: "Noto Sans", "Open Sans", sans-serif; }
.tabbar { flex: none; height: 32px; background: #3c3b37; display: flex; border-bottom: 1px solid #262522; color: #dfdbd2; font-size: 15px; }
.scroll-prev { width: 20px; border-right: 1px solid #8a8984; }
.scroll-next { width: 20px; border-left: 1px solid #8a8984; }
.newtab { width: 36px; }
.tablist { width: 29px; }
.tabrest { width: 15px; line-height: 34px; padding-left: 2px; }
.tabs { flex: 1; min-width: 0; display: flex; }
.tab { position: relative; flex: none; width: 100px; height: 32px; padding: 0 0 0 10px; display: flex; align-items: center; gap: 6px; white-space: nowrap; }
.tab.last { width: 81px; overflow: hidden; }
.tab::before { content: ""; position: absolute; left: 0; top: 6px; height: 22px; width: 1px; background: #77756e; }
.tab.active::before, .tab.plain::before { display: none; }
.tab.active { color: #4c4c4c; z-index: 1; }
.tab.active > * { position: relative; }
.tab.active .shape { position: absolute; left: -12px; top: 4px; }
.tab.active .x { margin-left: 10px; }

.navbar {
  flex: none;
  height: 42px;
  display: flex;
  align-items: center;
  padding: 0 0 2px 4px;
  background: linear-gradient(#f6f5f4, #f1f0ef);
  font-size: 14px;
}
.back { width: 33px; height: 33px; border-radius: 50%; border: 1px solid #b3b8bf; background: #f4f3f2; z-index: 1; }
.urlbox, .searchbox { height: 24px; background: #fff; border: 1px solid #aca8a3; border-radius: 2px; display: flex; align-items: center; }
.urlbox { flex: 1; margin-left: -8px; padding: 0 4px 0 12px; gap: 5px; }
.reload { color: #8a97a5; }
.reload.blue { color: #68a0d4; }
.url { flex: 1; min-width: 0; border: 0; padding: 0; font: inherit; color: transparent; background: linear-gradient(90deg, #333 127px, #999 127px); -webkit-background-clip: text; background-clip: text; }
.searchbox { width: 228px; margin-left: 8px; padding-left: 5px; gap: 5px; }
.searchbox input { flex: 1; min-width: 0; border: 0; padding: 0; font: inherit; background: none; }
.searchbox input::placeholder { color: #999; opacity: 1; }
.tools { display: flex; margin-left: 5px; }
.tools button { width: 38px; height: 36px; }
.tools button:first-child { width: 32px; }
.tools .sep { width: 30px; margin-right: 4px; background: linear-gradient(#c5ced6, #c5ced6) 0 50% / 1px 18px no-repeat; }
.tools .menu { width: 44px; margin-left: 4px; border-left: 1px solid #dcdad8; }

.bookmarks {
  flex: none;
  height: 31px;
  display: grid;
  grid-template-columns: 131px 134px 192px 190px 154px 191px 192px 1fr 20px;
  align-items: center;
  padding: 0 0 2px 6px;
  background: #f1f0ef;
  border-bottom: 1px solid #a5a29e;
  font-size: 14px;
  color: #4c4c4c;
}
.bookmarks a { display: flex; align-items: center; gap: 4px; white-space: nowrap; }

/* page area with scrollbars */
.viewport { flex: 1; min-height: 0; display: grid; grid-template: minmax(0, 1fr) 13px / minmax(0, 1fr) 13px; }
.page { overflow: hidden; background: #fff; font-family: "Liberation Sans", Arial, sans-serif; }
.vscroll, .hscroll { display: flex; background: #dcdad8; border: 1px solid #b5b2ae; }
.vscroll { flex-direction: column; }
.cap-btn { flex: none; width: 12px; height: 12px; display: flex; align-items: center; justify-content: center; background: #f6f5f4; border-radius: 6px; }
.vthumb { width: 12px; height: 30px; margin-top: 8px; margin-left: -1px; border: 1px solid #999; border-radius: 6px; background: #f8f8f7; display: flex; align-items: center; justify-content: center; }
.end { margin-top: auto; }
.hthumb { flex: 0 1 1176px; height: 12px; border: 1px solid #a5a29e; border-radius: 6px; background: linear-gradient(#fcfcfb, #e6e4e2); display: flex; align-items: center; justify-content: center; }
.hscroll .end { margin: 0 0 0 auto; }
.corner { background: #f1f0ef; }

.sitenav { position: relative; height: 40px; display: flex; background: #f4693d; color: #fff; font-weight: 700; font-size: 16px; line-height: 41px; box-shadow: 0 2px 3px rgba(0, 0, 0, .35); }
.navmain { flex: 1; padding-left: 23px; white-space: nowrap; }
.sitenav svg { margin-left: 6px; vertical-align: 3px; }
.sitenav a:first-child svg { margin-left: 5px; vertical-align: 1px; }
.sitenav .navside svg { margin-left: 6px; }
.navmain a { margin-right: 16px; }
.navmain a:first-child { margin-right: 20px; }
.navside { width: 368px; border-left: 1px solid #d9572c; padding-left: 10px; }

.body { display: flex; align-items: stretch; }
.left { flex: 1; min-width: 0; padding: 7px 24px 0 27px; }
.crossmark { display: flex; justify-content: flex-end; align-items: center; gap: 5px; margin-right: 137px; height: 32px; }
.cm { display: flex; flex-direction: column; font-family: "Noto Sans", sans-serif; font-size: 10px; line-height: 13px; color: #8a8a8a; }
.cm b { font-family: "Liberation Serif", serif; font-size: 15px; line-height: 15px; color: #222; padding-left: 4px; }
.cm svg { margin-right: 1px; }
.columns { display: flex; gap: 12px; padding-top: 5px; }
.article { flex: 1; min-width: 0; }
.kind { margin: 6px 0 0; font-size: 15px; line-height: 18px; }
h1, h2, h3 { margin: 0; font-family: Lato, "Open Sans", sans-serif; font-weight: 700; font-variant-ligatures: none; }
h1 { font-size: 28px; line-height: 37px; margin-top: 1px; }
.revised { display: inline-block; vertical-align: 4px; margin-right: 7px; padding: 0 7px; border-radius: 4px; background: #dc916c; color: #fff; font: italic 700 16px/19px Lato, sans-serif; }
.revised.small { display: block; width: 67px; margin: 0 0 2px; padding: 0; text-align: center; font-size: 14px; line-height: 18px; }
.authors { margin: 9px 0 12px; font-size: 16px; line-height: 21px; }
.authors a, .expand, .invited a, .referees a { color: #d2622d; }
sup { font-size: 12px; line-height: 0; }
.expand { display: flex; gap: 6px; align-items: center; font-size: 15px; line-height: 17px; margin-bottom: 14px; }
.article h2 { font: 700 25px/30px "Liberation Sans", sans-serif; margin-top: 24px; }
.abstract { margin: 16px -8px 0 0; font-size: 16px; line-height: 24px; }

.metricscol { width: 142px; flex: none; }
.metrics, .actions { border: 1px solid #ccc; border-radius: 5px; background: #f1f1f1; }
.metrics { height: 261px; padding: 16px 11px 0; font-family: Lato, sans-serif; text-align: center; }
.metrics h3 { color: #f4693d; font-size: 14px; line-height: 18px; }
.chart { display: block; margin: 0 auto 0 20px; }
.rule { height: 9px; margin-top: 5px; background: radial-gradient(circle, #d8d8d8 4px, transparent 5px), linear-gradient(#ddd, #ddd) 0 4px / 100% 1px no-repeat; }
.label { margin: 8px -8px 11px; display: flex; align-items: center; justify-content: center; gap: 6px; font-size: 14px; line-height: 18px; font-weight: 700; color: #999; white-space: nowrap; }
.count { margin: 0; height: 27px; border-radius: 14px; background: #fff; color: #f4693d; font-size: 19px; line-height: 27px; font-weight: 700; }
.actions { margin-top: 7px; height: 300px; padding: 6px 15px; display: flex; flex-direction: column; gap: 12px; }
.actions button { flex: none; height: 34px; border: 1px solid #c8c8c8; border-radius: 7px; background: #e2e2e2; color: #d2622d; font-weight: 700; font-size: 15px; justify-content: flex-start; gap: 9px; padding: 0 0 2px 3px; text-shadow: 0 1px 0 #fff; }

.review { width: 390px; flex: none; margin-top: 7px; padding: 16px 16px 0 26px; border: 1px solid #ccc; border-width: 1px 0 0 1px; border-top-left-radius: 6px; background: #ececec; font-size: 15px; }
.review h2 { font-size: 28px; line-height: 34px; }
.card { background: #fff; border-radius: 4px; }
.status { margin-top: 13px; height: 53px; padding: 0 14px 2px; display: flex; align-items: center; gap: 10px; font-size: 16px; }
.status b { padding-top: 8px; }
.invited { margin-top: 14px; height: 266px; padding: 4px 15px; }
.invited table { width: 100%; border-collapse: collapse; table-layout: fixed; }
.col-version { width: 91px; }
.invited th, .invited td { padding: 0; text-align: center; vertical-align: top; }
.invited td:first-child { padding-left: 4px; text-align: left; line-height: 18px; white-space: nowrap; }
.cap th { font: 600 18px/30px Lato, sans-serif; }
.nums th { font: 700 19px/31px Lato, sans-serif; }
.nums th, .nums td { border-bottom: 1px dotted #888; }
.v2 { height: 109px; }
.v2 td { padding-top: 16px; }
.v2 td + td { padding-top: 21px; }
.v1 td + td { padding-top: 5px; }
.invited a { display: block; font-size: 12px; line-height: 18px; }
.invited a svg { display: block; margin: 0 auto; }
.up { display: block; margin: 8px auto 0; }
.referees { list-style: none; margin: 29px 0 0; padding: 0; line-height: 20px; }
.referees li { display: flex; margin-bottom: 4px; }
.referees span { width: 20px; flex: none; padding-left: 2px; }
.referees p { margin: 0; }
.referees a { font-weight: 700; }
```
